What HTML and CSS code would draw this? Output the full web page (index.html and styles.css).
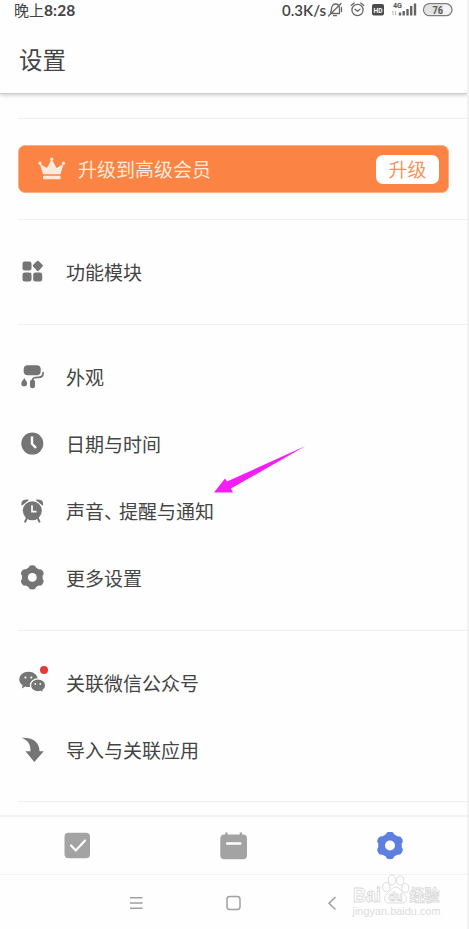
FILE: index.html
```html
<!DOCTYPE html>
<html lang="zh-CN">
<head>
<meta charset="utf-8">
<title>设置</title>
<link rel="stylesheet" href="styles.css">
</head>
<body>
<svg width="0" height="0" class="defs">
  <symbol id="gear" viewBox="0 0 28 28">
    <circle cx="14" cy="14" r="11.8"/>
    <rect x="9.8" y="0.2" width="8.4" height="27.6" rx="3.8"/>
    <rect x="9.8" y="0.2" width="8.4" height="27.6" rx="3.8" transform="rotate(60 14 14)"/>
    <rect x="9.8" y="0.2" width="8.4" height="27.6" rx="3.8" transform="rotate(120 14 14)"/>
    <circle cx="14" cy="14" r="5" fill="#fff"/>
  </symbol>
</svg>
<div class="phone">
  <header class="header">
    <div class="status">
      <span class="time">晚上<b>8:28</b></span>
      <span class="speed">0.3K/s</span>
      <svg class="status-icons" width="128" height="20" viewBox="0 0 128 20">
        <g fill="none" stroke="#666" stroke-width="1.3" stroke-linecap="round" stroke-linejoin="round">
          <path d="M3.500 13.500h9V8.200C12.500 5.500 10.500 4 8.500 4S4.700 5.600 4.700 8.200L3.500 13.500M6.500 15.700h3M1.500 16L14 3.500M14.500 7.500v4"/>
          <circle cx="30.500" cy="10" r="5.600"/><path d="M28 9.300l2.500 2 2.500-2M24.200 5.400l3-2.500M36.800 5.400l-3-2.500"/>
        </g>
        <rect x="45" y="4" width="12" height="11.500" rx="2" fill="#4c4c4c"/>
        <text x="46.500" y="12.500" class="hd" textLength="9" lengthAdjust="spacingAndGlyphs">HD</text>
        <text x="66" y="7.500" class="fourg" textLength="9" lengthAdjust="spacingAndGlyphs">4G</text>
        <path d="M66 11v4M65 12l1-1M68.500 11v4M69.500 14l-1 1" stroke="#bbb" fill="none"/>
        <path d="M73 15.500v-3M76.700 15.500V11M80.500 15.500V9M84.200 15.500V6M88 15.500V3.500" stroke="#666" stroke-width="2.400"/>
        <rect x="96.500" y="3.700" width="28.500" height="12" rx="6" fill="#f4f4f4" stroke="#7c7c7c" stroke-width="1.300"/>
        <path d="M100 5h16v9.500h-16q-2.500-1.500-2.500-4.700T100 5z" fill="#e2e2e2"/>
        <text x="105.500" y="13.500" class="battery" textLength="10.500" lengthAdjust="spacingAndGlyphs">76</text>
      </svg>
    </div>
    <h1>设置</h1>
  </header>

  <main>
    <section class="upgrade">
      <div class="banner">
        <svg width="28" height="25" viewBox="0 0 28 25" fill="#fdeadd">
          <path d="M5 18.200L1.800 7.800 9 12l4.700-9 4.800 9 7.200-4.200-3.200 10.400z"/>
          <circle cx="13.700" cy="3.300" r="1.700"/><circle cx="2" cy="7.200" r="1.600"/><circle cx="25.500" cy="7.200" r="1.600"/>
          <rect x="5" y="19.800" width="17.600" height="3.500" rx="1"/>
        </svg>
        <span class="label">升级到高级会员</span>
        <span class="button">升级</span>
      </div>
    </section>
    <section>
      <div class="row">
        <svg viewBox="0 0 28 28"><rect x="4.500" y="3.500" width="9" height="9" rx="2.300"/><rect x="4.500" y="14.500" width="9" height="9" rx="2.300"/><rect x="15.200" y="14.500" width="9" height="9" rx="2.300"/><rect x="15.800" y="3.800" width="8" height="8" rx="1.500" transform="rotate(45 19.800 7.800)"/></svg>
        <span>功能模块</span>
      </div>
    </section>
    <section>
      <div class="row">
        <svg viewBox="0 0 28 28"><rect x="5.700" y="2.300" width="17" height="10" rx="4"/><path d="M25 9.200c.5 4-1.500 5.100-4.500 5.100-4 0-6 .2-6 3.400" fill="none" stroke="#757575" stroke-width="1.800"/><rect x="12" y="16.500" width="5" height="8.800" rx="2.500"/><path d="M6.300 15c1 2.200 2.800 3.400 2.800 5.400a2.900 2.900 0 0 1-5.800 0c0-2 2-3.200 3-5.400z"/></svg>
        <span>外观</span>
      </div>
      <div class="row">
        <svg viewBox="0 0 28 28"><circle cx="14.300" cy="13.600" r="11"/><path d="M14 6.500v7.200l4 4.300" fill="none" stroke="#fff" stroke-width="2.400"/></svg>
        <span>日期与时间</span>
      </div>
      <div class="row">
        <svg viewBox="0 0 28 28"><circle cx="14.300" cy="13.700" r="9.500"/><path d="M3.800 8.700C2.300 4.700 5.500 1.400 11 2.900zM24.800 8.700c1.500-4-1.700-7.300-7.200-5.800z"/><path d="M8.600 21.700l-1.500 3M20 21.700l1.500 3" stroke="#757575" stroke-width="2" stroke-linecap="round"/><path d="M14 8.200v6.500h4.500" fill="none" stroke="#fff" stroke-width="1.700"/></svg>
        <span>声音<span class="comma">、</span>提醒与通知</span>
      </div>
      <div class="row">
        <svg viewBox="0 0 28 28"><use href="#gear" x="1.900" y="1" width="24.800" height="24.800"/></svg>
        <span>更多设置</span>
      </div>
    </section>
    <section>
      <div class="row">
        <svg viewBox="0 0 28 28"><path d="M10.500 2.800c5.200 0 9.200 3.300 9.200 7.700s-4 7.600-9.200 7.600q-1.700 0-3.200-.5L3.800 19.600l.8-3.300C2.500 14.800 1.300 12.800 1.300 10.500c0-4.400 4-7.700 9.200-7.700z"/><path d="M20 9.900c4.500 0 7.700 2.700 7.700 6.500 0 2-1 3.700-2.700 4.800l.5 2.700-2.900-1.400q-1.200.3-2.600.3c-4.300 0-7.500-2.700-7.500-6.400s3.200-6.500 7.500-6.500z" stroke="#fff" stroke-width="1.300"/><g fill="#fff"><circle cx="7.400" cy="8.500" r="1.100"/><circle cx="13.300" cy="8.500" r="1.100"/><circle cx="17.300" cy="14.900" r=".9"/><circle cx="22.300" cy="14.900" r=".9"/></g></svg>
        <i class="dot"></i>
        <span>关联微信公众号</span>
      </div>
      <div class="row">
        <svg viewBox="0 0 28 28"><path d="M3.500 1.700C14 1.200 21.500 5.500 21.500 15.200h4.300L16.300 26 7.500 15.200h5C12.800 8.700 10 4 3.500 1.700z"/></svg>
        <span>导入与关联应用</span>
      </div>
    </section>
    <svg class="pointer" width="92" height="48" viewBox="0 0 92 48"><path d="M91.500 1L13 36.500 11 33.500 0 47.500h19l-2-4z" fill="#f51df5"/></svg>
  </main>

  <nav class="tabs">
    <svg viewBox="0 0 28 28"><rect x=".5" y=".8" width="25.500" height="25.500" rx="4" fill="#a3a3a3"/><path d="M7 13.500l4.800 5L21 8.500" fill="none" stroke="#fff" stroke-width="2.200" stroke-linecap="round"/></svg>
    <svg viewBox="0 0 28 28"><rect x=".3" y="2.500" width="26.700" height="24.700" rx="4" fill="#a3a3a3"/><path d="M6.400.5v4M20.900.5v4" stroke="#a3a3a3" stroke-width="2.400"/><path d="M7.200 11.500h13" stroke="#fff" stroke-width="2.500" stroke-linecap="round"/></svg>
    <svg viewBox="0 0 28 28" fill="#5d7fdf"><use href="#gear" y="-.5"/></svg>
  </nav>
  <footer class="system">
    <svg viewBox="0 0 20 20"><path d="M4 4.700h12.500M4 10h12.500M4 15.200h12.500"/></svg>
    <svg viewBox="0 0 20 20"><rect x="3" y="3.500" width="13" height="13" rx="2.700"/></svg>
    <svg viewBox="0 0 20 20"><path d="M13.500 4L7 10.200l6.500 6.300"/></svg>
  </footer>
  <svg class="watermark" width="96" height="58" viewBox="0 0 96 58">
    <g fill="#fff" stroke="#dadada" stroke-width=".9">
      <text x="3" y="38" class="brand" textLength="28" lengthAdjust="spacingAndGlyphs">Bai</text>
      <ellipse cx="36.300" cy="23" rx="3.600" ry="4.500"/><ellipse cx="42" cy="16" rx="3.700" ry="5"/><ellipse cx="50.200" cy="16.500" rx="3.500" ry="4.600"/><ellipse cx="55.300" cy="24" rx="3.500" ry="4.500"/>
      <path d="M45.500 23c4 0 5 3.500 8 6.500 5 4.500 3 9.500-1 9.500h-14c-4 0-6-5-1-9.500 4-3 4.500-6.500 8-6.500z"/>
      <text x="38.500" y="36.500" class="du" textLength="14" lengthAdjust="spacingAndGlyphs">du</text>
      <text x="59.500" y="37" class="cn" textLength="30" lengthAdjust="spacingAndGlyphs">经验</text>
    </g>
    <text x="2.500" y="51" class="url" textLength="88" lengthAdjust="spacingAndGlyphs">jingyan.baidu.com</text>
  </svg>
</div>
</body>
</html>
```

FILE: styles.css
```css
* { box-sizing: border-box; }
body {
  margin: 0;
  background: #fefefe;
  color: #444;
  font-family: "Noto Sans CJK SC", sans-serif;
}
.defs { position: absolute; }
.phone {
  position: relative;
  display: flex;
  flex-direction: column;
  width: 469px;
  height: 929px;
  overflow: hidden;
  border-right: 2px solid #f1f1f1;
}
.header {
  height: 94px;
  background: #fefefe;
  border-bottom: 1px solid #cecece;
  box-shadow: 0 1px 4px rgba(0, 0, 0, .22);
}
.status {
  display: flex;
  align-items: center;
  height: 20px;
  padding: 0 12px 0 14px;
  font-size: 15px;
  line-height: 20px;
}
.time { flex: 1; margin-top: -1px; white-space: nowrap; }
.time b, .speed { font-family: Lato, sans-serif; }
.time b { font-size: 15.500px; font-weight: 700; letter-spacing: .1px; }
.speed { font-size: 15px; font-weight: 600; letter-spacing: 0; margin: -1px 1px 0 0; }
.hd { font: 700 7px Roboto, sans-serif; fill: #fff; }
.fourg { font: 700 7px Roboto, sans-serif; fill: #555; }
.battery { font: 700 10px Roboto, sans-serif; fill: #555; }
h1 {
  margin: 20px 0 0 19px;
  font-size: 23.500px;
  font-weight: 400;
  line-height: 39px;
}
main { position: relative; height: 721px; }
section {
  margin-left: 18px;
  padding: 18px 0 19px;
  border-bottom: 1px solid #efefef;
}
section:last-of-type { padding-bottom: 18px; }
.upgrade {
  margin-top: 24px;
  height: 102px;
  padding: 26px 18px 0 0;
  border-top: 1px solid #efefef;
}
.banner {
  display: flex;
  align-items: center;
  height: 48px;
  padding: 0 9px 0 19px;
  border: 1px solid #ffae7f;
  border-radius: 7px;
  background: #fb8343;
}
.banner svg { margin-top: -2px; }
.label {
  flex: 1;
  margin: -2px 0 0 12px;
  color: #fdeadd;
  font-size: 19px;
}
.button {
  width: 63px;
  height: 29px;
  border-radius: 7px;
  background: #fff;
  color: #f6935d;
  font-size: 19px;
  line-height: 28px;
  text-align: center;
}
.row {
  position: relative;
  display: flex;
  align-items: center;
  height: 67px;
  font-size: 19px;
}
.row svg { width: 28px; height: 28px; margin-right: 20px; fill: #757575; }
.comma { letter-spacing: -4px; }
.dot {
  position: absolute;
  left: 22px;
  top: 17px;
  width: 8px;
  height: 8px;
  border-radius: 50%;
  background: #e43b35;
}
.pointer { position: absolute; left: 214px; top: 351px; }
.tabs {
  display: grid;
  grid-template-columns: repeat(3, 156px);
  justify-items: center;
  align-items: center;
  height: 60px;
  border-top: 2px solid #f3f3f3;
  border-bottom: 1px solid #f3f3f3;
}
.tabs svg { width: 28px; height: 28px; }
.system {
  display: flex;
  gap: 78px;
  height: 54px;
  padding: 2px 0 0 126px;
  align-items: center;
}
.system svg {
  width: 20px;
  height: 20px;
  fill: none;
  stroke: #a0a0a0;
  stroke-width: 1.500;
}
.watermark { position: absolute; left: 350px; top: 864px; }
.brand { font: 700 20px "Liberation Sans", sans-serif; }
.du { font: 700 13px "Liberation Sans", sans-serif; }
.cn { font: 700 16px "Noto Sans CJK SC", sans-serif; }
.url { font: 10.500px "Liberation Sans", sans-serif; fill: #dcdcdc; }
```
